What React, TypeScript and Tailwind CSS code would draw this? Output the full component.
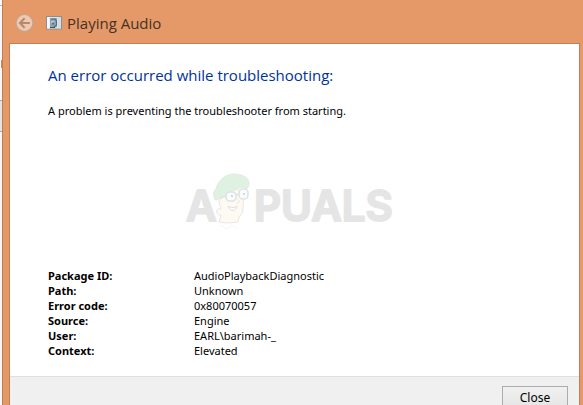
const DETAILS = [
  { label: "Package ID:", value: "AudioPlaybackDiagnostic" },
  { label: "Path:", value: "Unknown" },
  { label: "Error code:", value: "0x80070057" },
  { label: "Source:", value: "Engine" },
  { label: "User:", value: "EARL\\barimah-_" },
  { label: "Context:", value: "Elevated" },
];

function BackIcon() {
  return (
    <svg viewBox="0 0 20 20" className="size-5" fill="none" aria-hidden="true">
      <circle cx="9.5" cy="10" r="8.6" fill="#f0c8ae" stroke="#c9a189" strokeWidth="1.4" />
      <path d="M14.8 10H5M9.6 5.2 4.9 10l4.7 4.8" stroke="#b08a74" strokeWidth="2" />
    </svg>
  );
}

function TroubleshooterIcon() {
  return (
    <svg viewBox="0 0 16 14" className="h-3.5 w-4 shrink-0" aria-hidden="true">
      <rect x="0.5" y="0.5" width="15" height="12.5" fill="#dfe7ec" stroke="#8a8f92" />
      <rect x="1" y="1" width="2.5" height="11.5" fill="#f7fafb" />
      <rect x="12" y="1" width="3" height="11.5" fill="#d3dde4" />
      <path d="M4 2.5 11 2v9L7 12l-3-1z" fill="#8fa3b1" />
      <path d="M4.5 3H9l1.5 2v4L8 11" fill="none" stroke="#56677a" strokeWidth="1.1" />
      <path d="M5 5.5 8 5v1.5L6 8z" fill="#cfdce4" />
      <path d="M6 6.5h2v2H6z" fill="#5c6e7c" />
      <path d="M4 11.5h5" stroke="#46545f" />
    </svg>
  );
}

function Mascot() {
  return (
    <g fill="none" opacity="0.85">
      <path
        d="M33 27c0 3 1 6 2 9-3-1-5 1-4 4 1 2 2 2 4 2l-2 7 8 1 11-1 1-5c3-2 4-6 4-10l1-16-10-2z"
        fill="#fdf8f1"
        stroke="#e8e4de"
      />
      <path
        d="M29 27c-2-5-2-9 1-11C32 7 40 1 48 1c9 0 16 4 15 11l-2 4c-3-2-7-2-10 0-6 4-11 4-14 7-3 2-5 4-8 4z"
        fill="#daf0dd"
        stroke="#e0e8dd"
      />
      <g stroke="#d9dfe2" strokeWidth="1.6">
        <rect x="40" y="19" width="10" height="9" rx="4" fill="#fbfcfc" />
        <rect x="53" y="16" width="9" height="10" rx="4" fill="#fbfcfc" />
        <path d="m50 22 3-1M34 25l6-2" />
      </g>
      <path d="M45 23h2M57 21h2" stroke="#d0d4d7" strokeWidth="2" />
      <path d="M51 26c3 2 3 4 0 4" stroke="#ece2d8" />
      <path d="M42 33c3 2 7 2 9 0-1 5-6 7-9 0z" fill="#fff" stroke="#dcd8d5" />
      <path d="m34 52 7 4 5-4 6 4" stroke="#f3f7f8" />
    </g>
  );
}

function Watermark() {
  return (
    <svg
      viewBox="0 0 208 60"
      className="ml-[138px] h-[60px] w-52 font-['Inter',sans-serif] text-[42px] font-semibold text-[#e5e5e5] select-none"
      role="img"
      aria-label="APPUALS"
    >
      <g fill="currentColor" stroke="currentColor" strokeWidth="2" strokeLinejoin="round">
        <text x="0" y="48">
          A
        </text>
        <text x="68" y="48">
          PUALS
        </text>
      </g>
      <Mascot />
    </svg>
  );
}

// Sliver of the window that sits behind the dialog
function BackgroundWindow() {
  return (
    <div className="flex w-0.5 shrink-0 flex-col overflow-hidden bg-[#f8f8f8]">
      <div className="h-1.5 border-b border-[#b5b5b5]" />
      <div className="mt-[54px] h-2 border-r border-[#c08a5e]" />
      <div className="mt-8 h-8 border-y border-[#a8a8a8] bg-[#e4e4e4]" />
    </div>
  );
}

export default function App() {
  return (
    <div className="flex h-screen overflow-hidden font-['Noto_Sans',sans-serif] text-[11px] text-black">
      <BackgroundWindow />
      <div
        role="dialog"
        aria-labelledby="dialog-title"
        className="flex min-w-0 flex-1 flex-col border-l border-[#bd7d55] bg-[#e69968] pr-[3px] pl-1.5"
      >
        <header className="flex h-[43px] shrink-0 items-center gap-[11px] pt-0.5 pl-1.5 font-['Open_Sans',sans-serif]">
          <button type="button" aria-label="Back" disabled>
            <BackIcon />
          </button>
          <div className="flex items-center gap-[5px]">
            <TroubleshooterIcon />
            <h1 id="dialog-title" className="text-[15px] leading-5 text-[#443226]">
              Playing Audio
            </h1>
          </div>
        </header>

        <div className="flex flex-1 flex-col border border-b-0 border-[#c07f56] bg-white">
          <main className="px-[38px] pt-[19px] pb-[18px]">
            <h2 className="font-['Open_Sans',sans-serif] text-[15px] leading-6 text-[#003399]">
              An error occurred while troubleshooting:
            </h2>
            <p className="mt-4 leading-[15px]">A problem is preventing the troubleshooter from starting.</p>
            <div className="mt-[55px] mb-[35px]">
              <Watermark />
            </div>
            <dl className="leading-[15px]">
              {DETAILS.map((item) => (
                <div key={item.label} className="flex">
                  <dt className="w-[146px] shrink-0 font-bold">{item.label}</dt>
                  <dd>{item.value}</dd>
                </div>
              ))}
            </dl>
          </main>
          <footer className="flex flex-1 items-start justify-end border-t border-[#dfdfdf] bg-[#f0f0f0] px-[11px] pt-[9px]">
            <button
              type="button"
              className="h-6 w-[66px] shrink-0 border border-[#acacac] bg-linear-to-b from-[#f0f0f0] to-[#e5e5e5] text-xs leading-5"
            >
              Close
            </button>
          </footer>
        </div>
      </div>
    </div>
  );
}
